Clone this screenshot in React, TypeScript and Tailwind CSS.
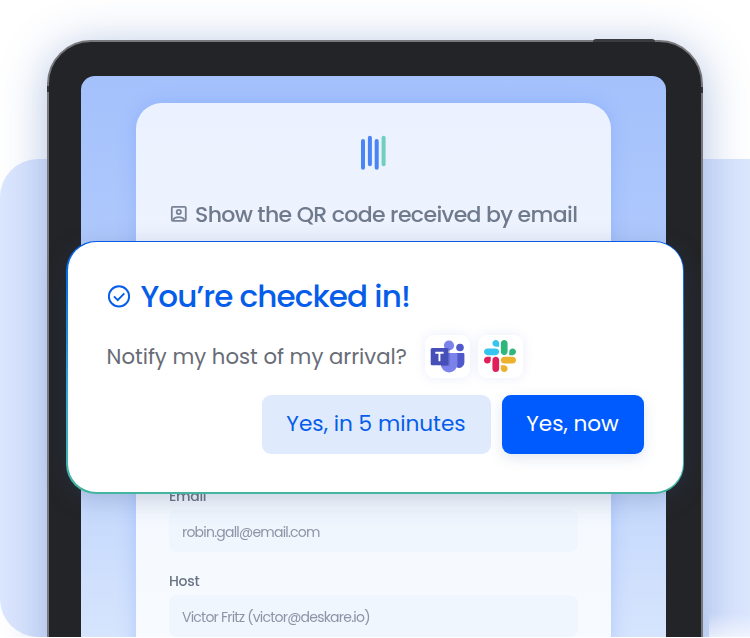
import type { ReactNode } from 'react'

const fields = [
  { label: 'Email', value: 'robin.gall@email.com' },
  { label: 'Host', value: 'Victor Fritz (victor@deskare.io)' },
]

function DeskareLogo() {
  return (
    <svg width="28" height="36" viewBox="0 0 28 36" fill="none" strokeWidth="4" strokeLinecap="round" className="blur-[0.5px]">
      <path d="M3 6V32.800M9.900 2.700V29.300M16.700 6V32.800" stroke="#4b84f5" />
      <path d="M23.600 2.700V29.300" stroke="#70cfc0" />
    </svg>
  )
}

function PortraitIcon() {
  return (
    <svg width="18" height="18" viewBox="0 0 18 18" fill="none" stroke="#7a8395" strokeWidth="1.8" className="ml-px shrink-0">
      <rect x="1.8" y="1.8" width="14" height="14" rx="1" />
      <circle cx="8.8" cy="6.9" r="2.1" />
      <path d="M3 14.8c1.3-2 3.4-2.600 5.800-2.600s4.500.6 5.800 2.600" />
    </svg>
  )
}

function CheckCircle() {
  return (
    <svg width="24" height="24" viewBox="0 0 24 24" fill="none" stroke="#055de9" strokeWidth="1.9" className="shrink-0">
      <circle cx="12" cy="11.4" r="10.1" />
      <path d="M7 11.400l3.700 3.700 6.600-6.700" />
    </svg>
  )
}

function TeamsIcon() {
  return (
    <svg width="35" height="33" viewBox="0 0 35 33">
      <circle cx="30" cy="7.5" r="3.8" fill="#5059c9" />
      <path d="M24 13h9.200a1.200 1.200 0 0 1 1.200 1.200v8.300a5.200 5.200 0 0 1-8 4.500z" fill="#5059c9" />
      <circle cx="19" cy="5.5" r="5.1" fill="#7b83eb" />
      <path d="M11 13h15.200a1.200 1.200 0 0 1 1.200 1.200v10a8.300 8.300 0 0 1-16.600 0z" fill="#7b83eb" />
      <path d="M11 8h7.200a1.500 1.500 0 0 1 1.500 1.500v15a1.500 1.500 0 0 1-1.500 1.500H11z" fill="#4049a8" opacity=".45" />
      <rect x="0.7" y="8" width="17.5" height="17.3" rx="1.5" fill="#464eb8" />
      <path d="M5.300 12.700h8.300M9.450 12.700v8.600" stroke="#fff" strokeWidth="1.9" />
    </svg>
  )
}

function SlackIcon() {
  return (
    <svg width="32" height="32" viewBox="0 0 122.8 122.8">
      <path d="M25.800 77.600c0 7.100-5.800 12.900-12.900 12.900S0 84.700 0 77.600s5.800-12.900 12.900-12.900h12.900zM32.300 77.600c0-7.100 5.800-12.900 12.900-12.900s12.900 5.800 12.900 12.900v32.300c0 7.100-5.800 12.900-12.900 12.900s-12.900-5.800-12.900-12.900z" fill="#e01e5a" />
      <path d="M45.200 25.800c-7.100 0-12.900-5.800-12.900-12.900S38.100 0 45.200 0s12.900 5.800 12.900 12.900v12.900zM45.200 32.300c7.100 0 12.900 5.800 12.900 12.900s-5.800 12.900-12.900 12.900H12.900C5.800 58.100 0 52.300 0 45.200s5.800-12.900 12.900-12.900z" fill="#36c5f0" />
      <path d="M97 45.200c0-7.100 5.800-12.900 12.900-12.900s12.900 5.800 12.900 12.900-5.800 12.900-12.900 12.900H97zM90.500 45.200c0 7.100-5.800 12.900-12.900 12.900s-12.900-5.800-12.900-12.900V12.900C64.700 5.800 70.500 0 77.600 0s12.900 5.800 12.900 12.900z" fill="#2eb67d" />
      <path d="M77.600 97c7.100 0 12.900 5.800 12.900 12.900s-5.800 12.900-12.900 12.900-12.900-5.800-12.900-12.900V97zM77.600 90.500c-7.100 0-12.900-5.800-12.900-12.900s5.800-12.900 12.900-12.900h32.300c7.100 0 12.900 5.800 12.900 12.900s-5.800 12.900-12.900 12.900z" fill="#ecb22e" />
    </svg>
  )
}

function AppTile({ children }: { children: ReactNode }) {
  return (
    <div className="flex h-[43px] w-[45px] items-center justify-center rounded-[9px] bg-white shadow-[0_0_12px_rgba(90,110,220,0.12)]">
      {children}
    </div>
  )
}

function Tablet() {
  return (
    <div className="relative ml-[47px] mt-[40px] h-[660px] w-[656px] rounded-[44px] border-2 border-[#77777c] bg-[#222427] pl-8 pr-[35px] pt-[34px] shadow-[0_6px_46px_rgba(50,95,180,0.38)]">
      <div className="absolute -top-[3px] right-[46px] h-[3px] w-[62px] rounded-t bg-[#3b3c40]" />
      <div className="absolute -left-[2px] top-[44px] h-[6px] w-[2px] bg-[#333438]" />
      <div className="absolute -right-[2px] top-[45px] h-[6px] w-[2px] bg-[#333438]" />

      <div className="h-[640px] overflow-hidden rounded-t-[14px] bg-linear-to-b from-[#a4c1fc] via-[#b9d0fc] via-50% to-[#d8e6fd] to-90% px-[55px] pt-[27px]">
        <div className="flex h-[640px] flex-col rounded-t-[26px] bg-linear-to-b from-[#ebf1fe] to-[#f7fbff] to-80% pl-[33px] pt-[32px] shadow-[0_0_18px_rgba(90,140,250,0.3)]">
          <div className="flex justify-center pr-[33px]">
            <DeskareLogo />
          </div>
          <div className="mt-[25px] flex h-9 items-center gap-[7px] whitespace-nowrap text-[#6f7a8d] blur-[0.6px]">
            <PortraitIcon />
            <span className="text-[22px] font-medium tracking-[-0.62px]">Show the QR code received by email</span>
          </div>
          <div className="mt-[254px] flex flex-col gap-[19px] blur-[0.6px]">
            {fields.map(field => (
              <div key={field.label} className="flex flex-col">
                <span className="h-[24px] text-sm font-medium leading-5 tracking-[-0.3px] text-[#6b7485]">{field.label}</span>
                <div className="flex h-[42px] w-[409px] items-center rounded-lg bg-[#f0f6fe] px-[13px] pt-px">
                  <span className="text-sm tracking-[-0.78px] text-[#8c95a6]">{field.value}</span>
                </div>
              </div>
            ))}
          </div>
        </div>
      </div>
    </div>
  )
}

function CheckedInCard() {
  return (
    <div className="absolute left-[66px] top-[240.5px] h-[253px] w-[618px] rounded-[30px] bg-linear-to-b from-[#075be5] via-[#35a7d5] via-60% to-[#45b5a0] p-[1.5px] shadow-[0_6px_26px_rgba(55,75,120,0.24)]">
      <div className="flex h-full flex-col rounded-[28.5px] bg-white px-[39px] pt-[36.5px]">
        <div className="flex h-9 items-center gap-[10px] text-[#055de9]">
          <CheckCircle />
          <h1 className="whitespace-nowrap text-[31px] font-medium tracking-[-0.88px]">You’re checked in!</h1>
        </div>
        <div className="mt-[20px] flex h-[43px] items-center">
          <p className="w-[318px] whitespace-nowrap pt-px text-[21.2px] text-[#686c77]">Notify my host of my arrival?</p>
          <div className="flex gap-[8px]">
            <AppTile><TeamsIcon /></AppTile>
            <AppTile><SlackIcon /></AppTile>
          </div>
        </div>
        <div className="mt-[17px] flex justify-end gap-[11px] text-[21.6px]">
          <button className="h-[59px] w-[229px] whitespace-nowrap rounded-[9px] bg-[#dfeafd] pt-px text-[#055de9]">Yes, in 5 minutes</button>
          <button className="h-[59px] w-[142px] whitespace-nowrap rounded-[9px] bg-[#005bff] pt-px text-white shadow-[0_4px_14px_rgba(50,80,150,0.15)]">Yes, now</button>
        </div>
      </div>
    </div>
  )
}

export default function App() {
  return (
    <div className="h-[638px] w-[750px] overflow-hidden bg-white font-['Poppins',Inter,sans-serif]">
      <div className="relative isolate flow-root h-[637px] overflow-hidden">
        <div className="absolute left-0 top-[159px] -z-10 h-[478px] w-[800px] rounded-l-[38px] bg-[#dbe6fe]" />
        <Tablet />
        <div className="absolute bottom-0 left-[709px] h-[24px] w-[41px] bg-linear-to-b from-transparent to-white/60" />
        <CheckedInCard />
      </div>
    </div>
  )
}
